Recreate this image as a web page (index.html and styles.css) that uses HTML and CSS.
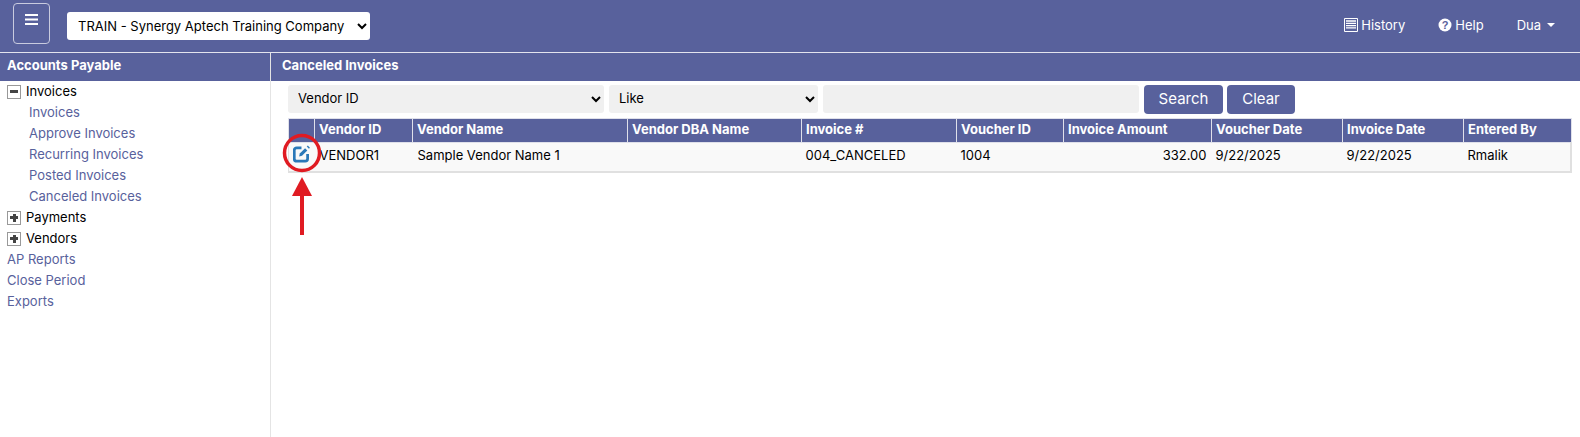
FILE: index.html
```html
<!DOCTYPE html>
<html lang="en">
<head>
    <meta charset="UTF-8">
    <title>Canceled Invoices</title>
    <link rel="stylesheet" href="styles.css">
</head>
<body>
    <header class="topbar">
        <button class="menu-btn" type="button">
            <svg width="13" height="12" viewBox="0 0 13 12"><path d="M0 1h13M0 5.500h13M0 10h13" stroke="#fff" stroke-width="2"/></svg>
        </button>
        <select class="company">
            <option>TRAIN - Synergy Aptech Training Company</option>
        </select>
        <nav class="topnav">
            <a href="#">
                <svg width="14" height="14" viewBox="0 0 14 14"><path d="M.5.5h13v13H.5z" fill="none" stroke="#fff"/><path d="M2 3h10M2 5.300h10M2 7.600h10M2 9.900h10" stroke="#fff" stroke-width="1.300"/></svg>
                History
            </a>
            <a href="#">
                <svg width="14" height="14" viewBox="0 0 14 14"><circle cx="7" cy="7" r="6.500" fill="#fff"/><text x="7" y="10.500" class="help-mark">?</text></svg>
                Help
            </a>
            <a href="#" class="user">Dua <span class="caret"></span></a>
        </nav>
    </header>
    <div class="main">
        <aside class="side">
            <h2 class="bar">Accounts Payable</h2>
            <ul class="tree">
                <li class="node"><span class="tog tog-minus"></span>Invoices</li>
                <li class="leaf"><a href="#">Invoices</a></li>
                <li class="leaf"><a href="#">Approve Invoices</a></li>
                <li class="leaf"><a href="#">Recurring Invoices</a></li>
                <li class="leaf"><a href="#">Posted Invoices</a></li>
                <li class="leaf"><a href="#">Canceled Invoices</a></li>
                <li class="node"><span class="tog tog-plus"></span>Payments</li>
                <li class="node"><span class="tog tog-plus"></span>Vendors</li>
                <li><a href="#">AP Reports</a></li>
                <li><a href="#">Close Period</a></li>
                <li><a href="#">Exports</a></li>
            </ul>
        </aside>
        <section class="content">
            <h2 class="bar bar-content">Canceled Invoices</h2>
            <div class="inner">
                <form class="search">
                    <select class="field f-col"><option>Vendor ID</option></select>
                    <select class="field f-op"><option>Like</option></select>
                    <input class="field f-val" type="text">
                    <button class="btn btn-search" type="button">Search</button>
                    <button class="btn btn-clear" type="button">Clear</button>
                </form>
                <table class="grid">
                    <colgroup>
                        <col class="c-edit"><col class="c-id"><col class="c-name"><col class="c-dba"><col class="c-inv">
                        <col class="c-vou"><col class="c-amt"><col class="c-vd"><col class="c-id2"><col>
                    </colgroup>
                    <thead>
                        <tr>
                            <th></th>
                            <th>Vendor ID</th>
                            <th>Vendor Name</th>
                            <th>Vendor DBA Name</th>
                            <th>Invoice #</th>
                            <th>Voucher ID</th>
                            <th>Invoice Amount</th>
                            <th>Voucher Date</th>
                            <th>Invoice Date</th>
                            <th>Entered By</th>
                        </tr>
                    </thead>
                    <tbody>
                        <tr>
                            <td class="edit">
                                <svg class="edit-icon" width="18" height="18" viewBox="1 .5 17 17" fill="none">
                                    <path d="M9 3.200H4.500a2.300 2.300 0 0 0-2.300 2.300v8a2.300 2.300 0 0 0 2.300 2.300h8a2.300 2.300 0 0 0 2.300-2.300V9" stroke="#2a78b8" stroke-width="2.600"/>
                                    <path d="M6.800 11.300l.6-2.700 5-5 2.100 2.100-5 5z" fill="#2a78b8"/>
                                    <path d="M14 2l1-1 2 2-1 1z" fill="#2a78b8"/>
                                </svg>
                            </td>
                            <td class="wide">VENDOR1</td>
                            <td class="wide">Sample Vendor Name 1</td>
                            <td></td>
                            <td>004_CANCELED</td>
                            <td>1004</td>
                            <td class="num">332.00</td>
                            <td>9/22/2025</td>
                            <td>9/22/2025</td>
                            <td>Rmalik</td>
                        </tr>
                    </tbody>
                </table>
            </div>
        </section>
    </div>
    <!-- annotation drawn over the screenshot -->
    <svg class="callout" width="64" height="110" viewBox="0 0 64 110" fill="none">
        <circle cx="32" cy="23" r="17.500" stroke="#e01b22" stroke-width="3.500"/>
        <path d="M32 62v43" stroke="#e01b22" stroke-width="4"/>
        <path d="M32 47l10 19H22z" fill="#e01b22"/>
    </svg>
</body>
</html>
```

FILE: styles.css
```css
*{margin:0;padding:0;box-sizing:border-box;}
html,body{width:100%;height:100%;}
body{font-family:"Inter","Liberation Sans",sans-serif;font-size:13px;color:#000;background:#fff;overflow:hidden;position:relative;}
a{text-decoration:none;}
ul{list-style:none;}

.topbar{display:flex;align-items:center;height:53px;padding:0 25px 0 13px;background:#58619c;border-bottom:1px solid #e3e4ee;}
.menu-btn{display:flex;justify-content:center;padding-top:10px;width:37px;height:41px;background:#58619c;border:1px solid #c9cbdf;border-radius:4px;margin-top:-5px;}
.company{width:303px;height:28px;margin-left:17px;margin-top:-1px;padding-left:7px;font:13px "Inter","Liberation Sans",sans-serif;background:#fff;border:0;border-radius:3px;color:#000;}
.topnav{display:flex;align-items:center;margin-left:auto;margin-top:-3px;gap:33px;}
.topnav a{display:flex;align-items:center;gap:3px;color:#fff;font-size:13px;}
.help-mark{font:bold 11px "Liberation Sans",sans-serif;fill:#58619c;text-anchor:middle;}
.user{gap:6px;}
.caret{display:inline-block;margin-left:3px;border-left:4px solid transparent;border-right:4px solid transparent;border-top:4px solid #fff;}

.main{display:flex;height:384px;}
.side{flex:none;width:271px;border-right:1px solid #e4e4e4;}
.bar{height:28px;padding-left:7px;line-height:25px;background:#58619c;color:#fff;font-size:13px;font-weight:700;}
.bar-content{padding-left:11px;}
.tree{padding:0 0 0 7px;}
.tree li{height:21px;line-height:21px;font-size:13px;}
.tree a{color:#58619c;}
.tree .leaf{padding-left:22px;}
.node{display:flex;align-items:center;}
.tog{position:relative;width:14px;height:14px;margin-right:5px;border:1px solid #999;background:#fff;}
.tog::before{content:"";position:absolute;left:2px;top:4.500px;width:8px;height:3px;background:#444;}
.tog-plus::after{content:"";position:absolute;left:4.500px;top:2px;width:3px;height:8px;background:#444;}

.content{flex:1;min-width:0;}
.inner{padding:4px 0 0 17px;}
.search{display:flex;height:29px;}
.field{height:28px;padding-bottom:2px;border:0;border-radius:3px;background:#f0f0f0;font:13px "Inter","Liberation Sans",sans-serif;color:#000;}
.f-col{width:316px;padding-left:6px;}
.f-op{width:209px;margin-left:5px;padding-left:6px;}
.f-val{width:316px;margin-left:5px;}
.btn{height:29px;margin-left:5px;padding-bottom:2px;background:#58619c;border:0;border-radius:4px;color:#fff;font:15px "Inter","Liberation Sans",sans-serif;}
.btn-search{width:79px;}
.btn-clear{width:68px;margin-left:4px;}

.grid{width:1284px;margin-top:4px;table-layout:fixed;border-collapse:collapse;}
.c-edit{width:26px;}
.c-id{width:98px;}
.c-name{width:215px;}
.c-dba{width:174px;}
.c-inv{width:155px;}
.c-vou{width:107px;}
.c-amt{width:148px;}
.c-vd{width:131px;}
.c-id2{width:121px;}
.grid th{height:24px;padding:0 4px 3px;background:#58619c;border:1px solid #dfe0ea;color:#fff;font-size:13px;font-weight:700;text-align:left;white-space:nowrap;overflow:hidden;}
.grid td{height:29px;padding:3px 4px 0;vertical-align:top;line-height:18px;background:#f9f9f9;border-top:1px solid #e0e0e0;border-bottom:2px solid #e0e0e0;white-space:nowrap;}
.grid td:first-child{border-left:1px solid #e0e0e0;}
.grid td:last-child{border-right:2px solid #e0e0e0;}
.grid .num{padding-right:5px;text-align:right;}
.grid .wide{padding-left:5px;}
.grid .edit{padding:2px 0 0 4px;}
.edit-icon{display:block;}

.callout{position:absolute;left:270px;top:130px;}
```
